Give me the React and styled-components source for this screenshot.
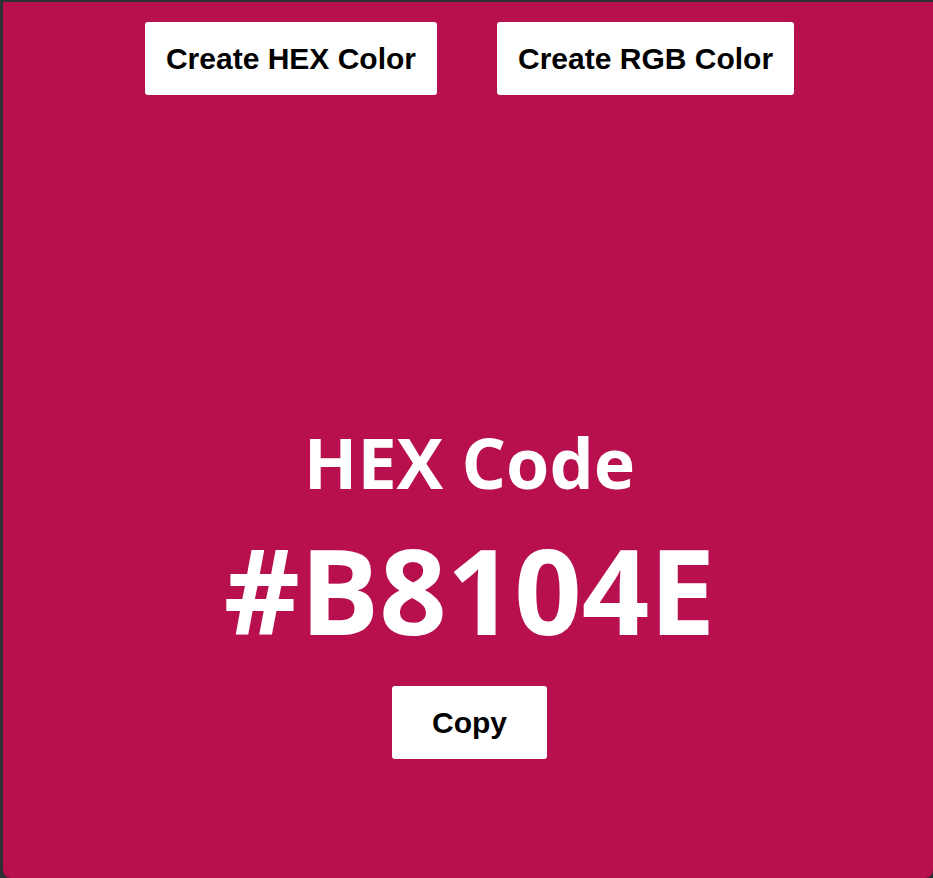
import React from "react";
import styled, { createGlobalStyle } from "styled-components";

const Global = createGlobalStyle`
  html, body { margin: 0; padding: 0; }
  body {
    background: #2d2f30;
    overflow: hidden;
  }
`;

const Page = styled.div`
  padding: 2px 0 0 3px;
  height: 878px;
  box-sizing: border-box;
`;

const Panel = styled.main`
  width: 930px;
  height: 876px;
  box-sizing: border-box;
  background: ${(p) => p.$color};
  border-radius: 0 0 8px 8px;
  display: flex;
  flex-direction: column;
  align-items: center;
  padding: 20px 0 119px 3px;
`;

const Toolbar = styled.div`
  display: flex;
  gap: 60px;
  justify-content: center;
`;

const Button = styled.button`
  background: #ffffff;
  color: #000000;
  border: none;
  border-radius: 3px;
  height: 73px;
  padding: 0 ${(p) => p.$pad}px;
  font-family: "Liberation Sans", Arial, sans-serif;
  font-weight: 700;
  font-size: 30px;
  cursor: pointer;
`;

const Result = styled.section`
  margin-top: auto;
  display: flex;
  flex-direction: column;
  align-items: center;
  color: #ffffff;
  font-family: "Open Sans", "Noto Sans", sans-serif;
  font-weight: 700;
`;

const Label = styled.h2`
  margin: 0;
  font-size: 70px;
  line-height: 1;
  font-weight: 700;
`;

const Code = styled.h1`
  margin: 34px 0 37px;
  font-size: 118px;
  line-height: 1;
  font-weight: 700;
`;

export default function App() {
  const hex = "#B8104E";
  return (
    <>
      <Global />
      <Page>
        <Panel $color={hex}>
          <Toolbar>
            <Button $pad={21}>Create HEX Color</Button>
            <Button $pad={21}>Create RGB Color</Button>
          </Toolbar>
          <Result>
            <Label>HEX Code</Label>
            <Code>{hex}</Code>
            <Button $pad={40}>Copy</Button>
          </Result>
        </Panel>
      </Page>
    </>
  );
}
